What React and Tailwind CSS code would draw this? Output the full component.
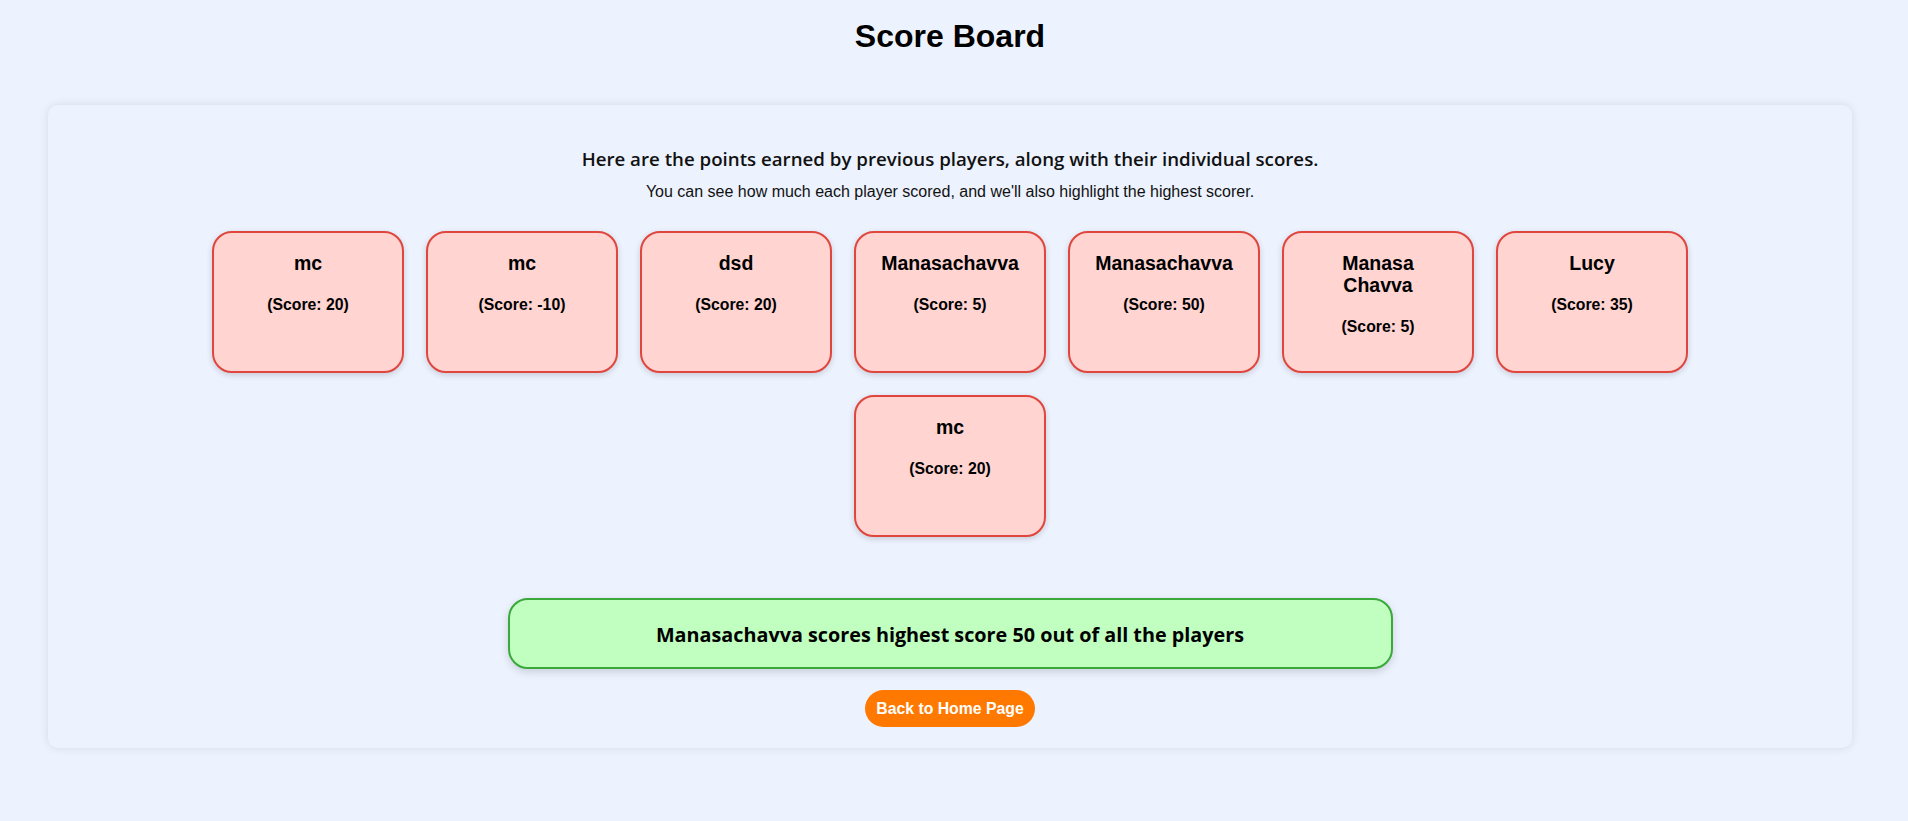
import React from "react";

const players = [
  { name: "mc", score: 20 },
  { name: "mc", score: -10 },
  { name: "dsd", score: 20 },
  { name: "Manasachavva", score: 5 },
  { name: "Manasachavva", score: 50 },
  { name: "Manasa Chavva", score: 5 },
  { name: "Lucy", score: 35 },
  { name: "mc", score: 20 },
];

function PlayerCard({ name, score }) {
  return (
    <div className="box-border h-[142px] w-[192px] rounded-[20px] border-2 border-[#e0463d] bg-[#ffd4d1] px-[24px] pt-[19px] text-center text-black shadow-[0_2px_6px_rgba(0,0,0,0.16)]">
      <div className="text-[19.5px] font-bold leading-[22.4px]">{name}</div>
      <div className="mt-[21.5px] text-[15.8px] font-bold leading-[18px]">(Score: {score})</div>
    </div>
  );
}

export default function App() {
  return (
    <div className="min-h-screen w-full bg-[#edf3fe] font-['Liberation_Sans',Arial,sans-serif] text-black">
      <div className="w-[1900px] pb-[73px]">
        <h1 className="pt-[17.6px] text-center text-[32px] font-bold leading-[37px]">Score Board</h1>
        <div className="mx-[48px] mt-[50.4px] rounded-[10px] bg-[#ecf2fe] pb-[20.5px] pt-[41.35px] shadow-[0_0_10px_rgba(0,0,0,0.1)]">
          <p className="text-center font-['Open_Sans','Noto_Sans',sans-serif] text-[18.7px] font-semibold leading-[26px] text-[#111]">
            Here are the points earned by previous players, along with their individual scores.
          </p>
          <p className="mt-[9.45px] text-center text-[16px] leading-[20px] text-[#111]">
            You can see how much each player scored, and we'll also highlight the highest scorer.
          </p>
          <div className="mx-auto mt-[28.9px] flex max-w-[1480px] flex-wrap justify-center gap-[22px]">
            {players.map((p, i) => (
              <PlayerCard key={i} name={p.name} score={p.score} />
            ))}
          </div>
          <div className="mx-auto mt-[61.6px] box-border flex h-[71px] w-[885px] items-center justify-center rounded-[20px] border-2 border-[#3aa83a] bg-[#c0ffc0] pt-[3px] shadow-[0_3px_8px_rgba(0,0,0,0.15)]">
            <span className="font-['Comic_Sans_MS','Open_Sans',sans-serif] text-[19.8px] font-bold leading-[26px] text-black">
              Manasachavva scores highest score 50 out of all the players
            </span>
          </div>
          <div className="mt-[20.7px] flex justify-center">
            <button className="flex h-[37.5px] items-center rounded-full bg-[#ff7900] px-[11px] text-[15.8px] font-bold text-white">
              Back to Home Page
            </button>
          </div>
        </div>
      </div>
    </div>
  );
}
